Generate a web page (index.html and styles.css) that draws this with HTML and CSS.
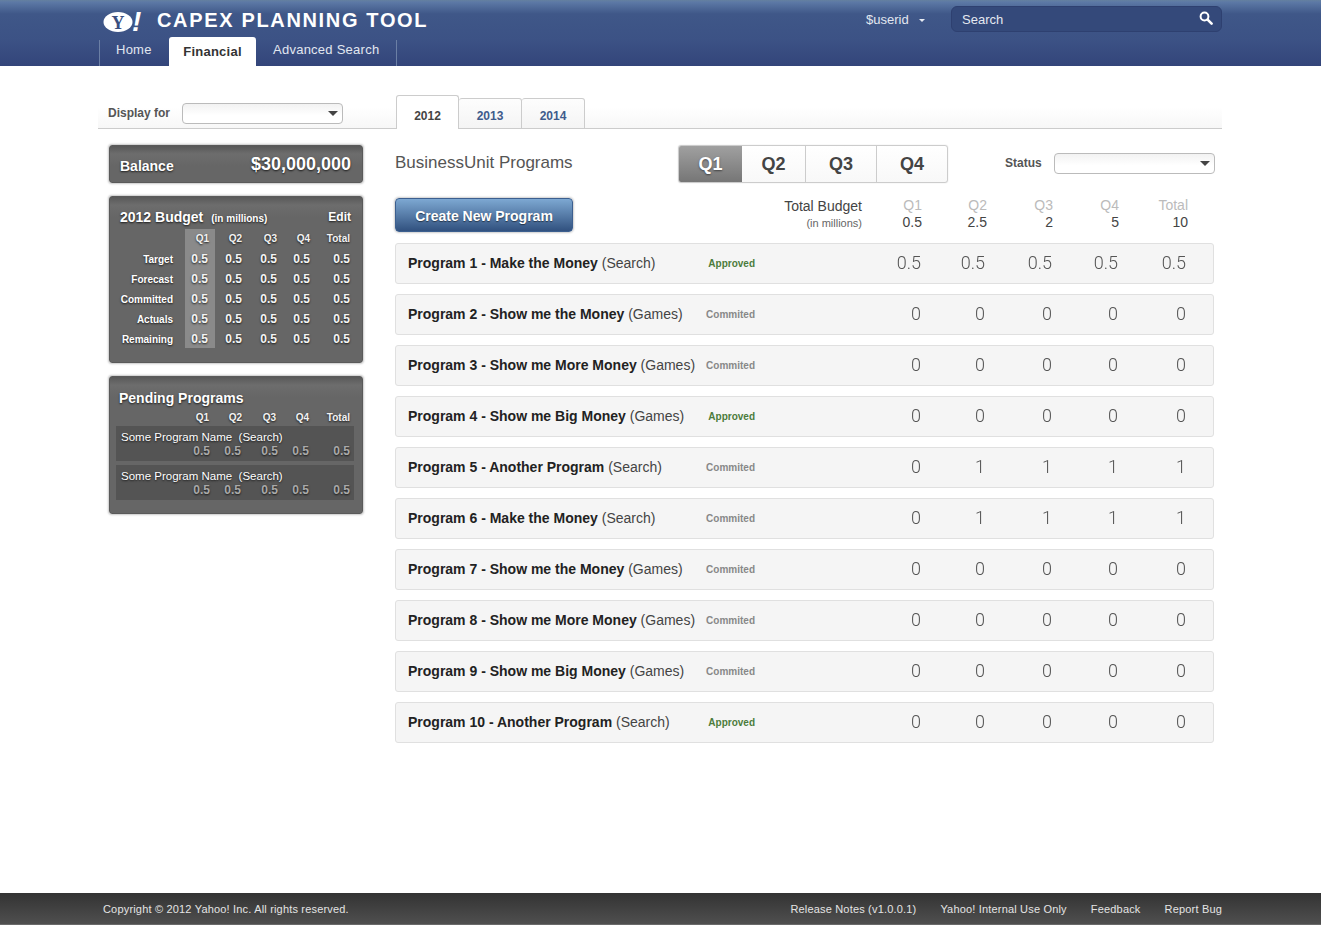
FILE: index.html
```html
<!DOCTYPE html>
<html lang="en">
<head>
<meta charset="utf-8">
<title>CAPEX Planning Tool</title>
<link rel="stylesheet" href="styles.css">
</head>
<body>
<header class="header">
  <div class="wrap">
    <div class="brand-row">
      <svg class="logo" width="44" height="36" viewBox="0 0 44 36" aria-label="Yahoo!">
        <ellipse cx="17" cy="20" rx="14.5" ry="10" fill="#fff"/>
        <text x="17" y="26.5" text-anchor="middle" class="logo-y">Y</text>
        <text x="31" y="29" class="logo-bang">!</text>
      </svg>
      <div class="app-title">CAPEX PLANNING TOOL</div>
      <div class="user">$userid<span class="caret caret-light"></span></div>
      <div class="search">
        <span>Search</span>
        <svg width="14" height="14" viewBox="0 0 14 14"><circle cx="5.5" cy="5.5" r="3.9" fill="none" stroke="#fff" stroke-width="2"/><line x1="8.6" y1="8.6" x2="12.6" y2="12.6" stroke="#fff" stroke-width="2.6" stroke-linecap="round"/></svg>
      </div>
    </div>
    <nav class="nav">
      <a class="nav-item">Home</a>
      <a class="nav-item active">Financial</a>
      <a class="nav-item">Advanced Search</a>
    </nav>
  </div>
</header>

<div class="wrap">
  <div class="toolbar">
    <label class="display-label">Display for</label>
    <div class="select select-display"><span class="caret"></span></div>
    <div class="years">
      <a class="year active">2012</a>
      <a class="year">2013</a>
      <a class="year">2014</a>
    </div>
  </div>

  <div class="content">
    <aside class="sidebar">
      <section class="panel balance">
        <span class="balance-label">Balance</span>
        <span class="balance-value">$30,000,000</span>
      </section>

      <section class="panel budget">
        <div class="budget-title">
          <span><b>2012 Budget</b><small>(in millions)</small></span>
          <a class="edit">Edit</a>
        </div>
        <div class="budget-grid">
          <div></div><div class="th hl">Q1</div><div class="th">Q2</div><div class="th">Q3</div><div class="th">Q4</div><div class="th">Total</div>
          <div class="lbl">Target</div><div class="val hl">0.5</div><div class="val">0.5</div><div class="val">0.5</div><div class="val">0.5</div><div class="val">0.5</div>
          <div class="lbl">Forecast</div><div class="val hl">0.5</div><div class="val">0.5</div><div class="val">0.5</div><div class="val">0.5</div><div class="val">0.5</div>
          <div class="lbl">Committed</div><div class="val hl">0.5</div><div class="val">0.5</div><div class="val">0.5</div><div class="val">0.5</div><div class="val">0.5</div>
          <div class="lbl">Actuals</div><div class="val hl">0.5</div><div class="val">0.5</div><div class="val">0.5</div><div class="val">0.5</div><div class="val">0.5</div>
          <div class="lbl">Remaining</div><div class="val hl">0.5</div><div class="val">0.5</div><div class="val">0.5</div><div class="val">0.5</div><div class="val">0.5</div>
        </div>
      </section>

      <section class="panel pending">
        <h3 class="pending-title">Pending Programs</h3>
        <div class="pending-cols pending-head"><div>Q1</div><div>Q2</div><div>Q3</div><div>Q4</div><div>Total</div></div>
        <div class="pending-row">
          <div class="pending-name">Some Program Name&nbsp; (Search)</div>
          <div class="pending-cols pending-vals"><div>0.5</div><div>0.5</div><div>0.5</div><div>0.5</div><div>0.5</div></div>
        </div>
        <div class="pending-row">
          <div class="pending-name">Some Program Name&nbsp; (Search)</div>
          <div class="pending-cols pending-vals"><div>0.5</div><div>0.5</div><div>0.5</div><div>0.5</div><div>0.5</div></div>
        </div>
      </section>
    </aside>

    <main class="main">
      <div class="main-head">
        <h2 class="main-title">BusinessUnit Programs</h2>
        <div class="quarters">
          <a class="quarter active">Q1</a>
          <a class="quarter">Q2</a>
          <a class="quarter q3">Q3</a>
          <a class="quarter q4">Q4</a>
        </div>
        <label class="status-label">Status</label>
        <div class="select select-status"><span class="caret"></span></div>
      </div>

      <div class="totals">
        <a class="create">Create New Program</a>
        <div class="total-label">Total Budget<small>(in millions)</small></div>
        <div class="total-col"><span>Q1</span>0.5</div>
        <div class="total-col"><span>Q2</span>2.5</div>
        <div class="total-col"><span>Q3</span>2</div>
        <div class="total-col"><span>Q4</span>5</div>
        <div class="total-col"><span>Total</span>10</div>
      </div>

      <div class="programs">
        <div class="program"><div class="name"><b>Program 1 - Make the Money</b> (Search)</div><div class="status approved">Approved</div><div class="num">0.5</div><div class="num">0.5</div><div class="num">0.5</div><div class="num">0.5</div><div class="num">0.5</div></div>
        <div class="program"><div class="name"><b>Program 2 - Show me the Money</b> (Games)</div><div class="status">Commited</div><div class="num">0</div><div class="num">0</div><div class="num">0</div><div class="num">0</div><div class="num">0</div></div>
        <div class="program"><div class="name"><b>Program 3 - Show me More Money</b> (Games)</div><div class="status">Commited</div><div class="num">0</div><div class="num">0</div><div class="num">0</div><div class="num">0</div><div class="num">0</div></div>
        <div class="program"><div class="name"><b>Program 4 - Show me Big Money</b> (Games)</div><div class="status approved">Approved</div><div class="num">0</div><div class="num">0</div><div class="num">0</div><div class="num">0</div><div class="num">0</div></div>
        <div class="program"><div class="name"><b>Program 5 - Another Program</b> (Search)</div><div class="status">Commited</div><div class="num">0</div><div class="num">1</div><div class="num">1</div><div class="num">1</div><div class="num">1</div></div>
        <div class="program"><div class="name"><b>Program 6 - Make the Money</b> (Search)</div><div class="status">Commited</div><div class="num">0</div><div class="num">1</div><div class="num">1</div><div class="num">1</div><div class="num">1</div></div>
        <div class="program"><div class="name"><b>Program 7 - Show me the Money</b> (Games)</div><div class="status">Commited</div><div class="num">0</div><div class="num">0</div><div class="num">0</div><div class="num">0</div><div class="num">0</div></div>
        <div class="program"><div class="name"><b>Program 8 - Show me More Money</b> (Games)</div><div class="status">Commited</div><div class="num">0</div><div class="num">0</div><div class="num">0</div><div class="num">0</div><div class="num">0</div></div>
        <div class="program"><div class="name"><b>Program 9 - Show me Big Money</b> (Games)</div><div class="status">Commited</div><div class="num">0</div><div class="num">0</div><div class="num">0</div><div class="num">0</div><div class="num">0</div></div>
        <div class="program"><div class="name"><b>Program 10 - Another Program</b> (Search)</div><div class="status approved">Approved</div><div class="num">0</div><div class="num">0</div><div class="num">0</div><div class="num">0</div><div class="num">0</div></div>
      </div>
    </main>
  </div>
</div>

<footer class="footer">
  <div class="wrap footer-inner">
    <span class="copyright">Copyright © 2012 Yahoo! Inc. All rights reserved.</span>
    <span class="footer-links">
      <a>Release Notes (v1.0.0.1)</a>
      <a>Yahoo! Internal Use Only</a>
      <a>Feedback</a>
      <a>Report Bug</a>
    </span>
  </div>
</footer>
</body>
</html>
```

FILE: styles.css
```css
* { box-sizing: border-box; }
html, body { height: 100%; }
body {
  margin: 0;
  min-height: 927px;
  display: flex;
  flex-direction: column;
  overflow: hidden;
  background: #fff;
  font-family: "Liberation Sans", Arial, sans-serif;
  color: #333;
}
.wrap { width: 1124px; margin-left: 98px; }

/* Header */
.header {
  height: 66px;
  background: linear-gradient(#64809f 0, #5d79a6 2px, #3f5788 14px, #3c5285 40px, #33457a 66px);
}
.brand-row { height: 37px; display: flex; align-items: flex-start; }
.logo { margin: 2px 0 0 3px; flex: none; overflow: visible; }
.logo-y { font: bold 18px "Liberation Serif", serif; fill: #3a4f80; }
.logo-bang { font: italic bold 28px "Liberation Sans", sans-serif; fill: #fff; }
.app-title {
  margin: 8px 0 0 12px;
  font-size: 20px;
  line-height: 24px;
  font-weight: 700;
  letter-spacing: 1.66px;
  color: #fff;
  white-space: nowrap;
}
.user {
  margin: 12px 0 0 auto;
  width: 85px;
  font-size: 13px;
  line-height: 15px;
  color: #e2e7f0;
  white-space: nowrap;
}
.caret {
  display: inline-block;
  width: 0;
  height: 0;
  border-left: 5px solid transparent;
  border-right: 5px solid transparent;
  border-top: 5px solid #444;
}
.caret-light {
  margin-left: 10px;
  vertical-align: 2px;
  border-left-width: 3px;
  border-right-width: 3px;
  border-top: 3px solid #e8ecf3;
}
.search {
  margin-top: 6px;
  width: 271px;
  height: 26px;
  padding: 0 8px 0 10px;
  display: flex;
  align-items: center;
  justify-content: space-between;
  background: #34497a;
  border: 1px solid #2e4070;
  border-radius: 6px;
  font-size: 13px;
  color: #e4e8f0;
}
.search svg { margin-bottom: 3px; }
.nav { height: 29px; display: flex; align-items: flex-end; font-size: 13px; letter-spacing: .25px; }
.nav-item {
  height: 26px;
  color: #e2e7f0;
  line-height: 20px;
  padding: 0 17px;
  border-left: 1px solid #6b7fa5;
  margin-left: 1px;
}
.nav-item:first-child { width: 70px; padding-left: 16px; }
.nav-item.active {
  height: 29px;
  width: 87px;
  margin-left: 0;
  padding: 0;
  text-align: center;
  border: 0;
  background: #fff;
  color: #333;
  font-weight: 700;
  line-height: 29px;
  border-radius: 3px 3px 0 0;
}
.nav-item:last-child { border-left: 0; border-right: 1px solid #6b7fa5; margin-left: 0; }

/* Toolbar */
.toolbar {
  margin-top: 29px;
  height: 34px;
  display: flex;
  align-items: flex-end;
  border-bottom: 1px solid #ccc;
  background: linear-gradient(#fff 12px, #f7f7f7);
}
.display-label {
  margin: 0 12px 7px 10px;
  width: 62px;
  font-size: 12px;
  line-height: 16px;
  font-weight: 700;
  color: #555;
  white-space: nowrap;
}
.select {
  height: 21px;
  display: flex;
  align-items: center;
  justify-content: flex-end;
  padding-right: 4px;
  background: linear-gradient(#f2f2f2, #fff 60%);
  border: 1px solid #bbb;
  border-radius: 4px;
}
.select-display { width: 161px; margin-bottom: 4px; }
.select-status { width: 161px; margin-bottom: 1px; }
.years { margin-left: 53px; display: flex; align-items: flex-end; margin-bottom: -1px; }
.year {
  width: 63px;
  height: 31px;
  padding-top: 9px;
  text-align: center;
  font-size: 12px;
  line-height: 16px;
  font-weight: 700;
  color: #3f5b8c;
  background: linear-gradient(#fdfdfd, #f4f4f4);
  border: 1px solid #ccc;
  border-width: 1px 1px 1px 0;
  border-radius: 3px 3px 0 0;
}
.year.active {
  height: 34px;
  padding-top: 12px;
  color: #444;
  background: #fff;
  border-width: 1px 1px 0 1px;
}

/* Layout */
.content { display: flex; align-items: flex-start; }
.sidebar {
  margin: 16px 0 0 11px;
  width: 254px;
  display: flex;
  flex-direction: column;
  gap: 13px;
}
.panel {
  background: linear-gradient(#585858 0, #6d6d6d 8px, #666 20px, #666 100%);
  border-radius: 3px;
  border: 1px solid #5a5a5a;
  box-shadow: 0 0 2px 1px rgba(0,0,0,.22);
  color: #fff;
  text-shadow: 0 1px 2px rgba(0,0,0,.75);
}
.balance {
  height: 38px;
  display: flex;
  align-items: center;
  justify-content: space-between;
  padding: 0 11px 0 10px;
}
.balance-label { font-size: 14px; font-weight: 700; padding-top: 3px; }
.balance-value { font-size: 18px; font-weight: 700; padding-top: 1px; }
.budget { height: 167px; padding: 0 13px 0 10px; }
.budget-title {
  height: 32px;
  display: flex;
  align-items: flex-end;
  justify-content: space-between;
  padding-bottom: 2px;
  line-height: 16px;
}
.budget-title b { font-size: 14px; }
.budget-title small { font-size: 10px; font-weight: 700; margin-left: 8px; }
.edit { font-size: 12px; font-weight: 700; margin: 0 -2px 2px 0; }
.budget-grid {
  display: grid;
  grid-template-columns: 65px 30px 27px 35px 33px 40px;
  grid-template-rows: 19px repeat(5, 20px);
}
.th { font-size: 10px; font-weight: 700; text-align: right; line-height: 19px; color: #f2f2f2; }
.val { font-size: 12px; font-weight: 700; text-align: right; line-height: 23px; color: #f4f4f4; }
.lbl { font-size: 10px; font-weight: 700; text-align: right; line-height: 24px; padding-right: 12px; white-space: nowrap; }
.hl { background: #8a8a8a; padding-right: 7px; }
.th.hl { padding-right: 6px; }
.pending { height: 138px; padding: 0 8px 0 6px; }
.pending-title {
  margin: 0;
  padding: 13px 0 0 3px;
  font-size: 14px;
  line-height: 17px;
  font-weight: 700;
}
.pending-cols {
  display: grid;
  grid-template-columns: 94px 31px 37px 31px 41px;
  text-align: right;
  font-size: 12px;
  font-weight: 700;
}
.pending-head {
  grid-template-columns: 93px 33px 34px 33px 41px;
  font-size: 10px;
  line-height: 15px;
  padding-top: 3px;
  margin-bottom: 1px;
  color: #f2f2f2;
}
.pending-row { height: 35px; margin-bottom: 4px; background: #545454; }
.pending-name {
  padding: 4px 0 0 5px;
  font-size: 11.5px;
  line-height: 14px;
  white-space: nowrap;
}
.pending-vals { line-height: 14px; color: #a9a9a9; }

/* Main */
.main { margin-left: 32px; width: 820px; }
.main-head { display: flex; align-items: center; padding-top: 16px; height: 54px; }
.main-title {
  margin: 0;
  width: 283px;
  font-size: 17px;
  font-weight: 400;
  color: #555;
  white-space: nowrap;
  padding-bottom: 3px;
}
.quarters {
  width: 270px;
  height: 38px;
  display: flex;
  background: linear-gradient(#fff, #f8f8f8);
  border: 1px solid #ccc;
  border-radius: 3px;
  box-shadow: 0 0 1px rgba(0,0,0,.25);
}
.quarter {
  width: 64px;
  text-align: center;
  font-size: 18px;
  font-weight: 700;
  line-height: 36px;
  color: #444;
  border-right: 1px solid #ccc;
}
.q3 { width: 71px; }
.q4 { flex: 1; border-right: 0; }
.quarter.active {
  width: 63px;
  color: #fff;
  border-right: 0;
  border-radius: 2px 0 0 2px;
  background: linear-gradient(#a0a0a0, #767676);
  text-shadow: 0 1px 2px rgba(0,0,0,.5);
}
.status-label {
  margin-left: 57px;
  width: 49px;
  font-size: 12px;
  font-weight: 700;
  color: #555;
  padding-bottom: 2px;
}
.totals {
  margin-top: 15px;
  height: 34px;
  display: grid;
  grid-template-columns: 178px 289px 60px 65px 66px 66px 69px;
  width: 793px;
}
.create {
  height: 34px;
  text-align: center;
  font-size: 14px;
  font-weight: 700;
  line-height: 34px;
  color: #fff;
  text-shadow: 0 1px 1px rgba(0,0,0,.5);
  background: linear-gradient(#7da8d2, #31517f);
  border: 1px solid #3c5f8f;
  border-radius: 4px;
  box-shadow: 0 0 2px 1px rgba(0,0,0,.2);
}
.total-label {
  text-align: right;
  font-size: 14px;
  line-height: 17px;
  color: #444;
}
.total-label small { display: block; font-size: 11px; line-height: 16px; color: #666; }
.total-col { text-align: right; font-size: 14px; line-height: 17px; color: #444; margin-top: -1px; }
.total-col span { display: block; color: #bbb; }
.programs { margin-top: 11px; display: flex; flex-direction: column; gap: 10px; width: 819px; }
.program {
  height: 41px;
  display: grid;
  grid-template-columns: 292px 55px 166px 64px 67px 66px 68px;
  align-items: center;
  padding-left: 12px;
  background: #f5f5f5;
  border: 1px solid #e0e0e0;
  border-radius: 3px;
}
.name { font-size: 14px; color: #444; white-space: nowrap; padding-bottom: 1px; }
.name b { color: #222; }
.status { font-size: 10px; font-weight: 700; color: #888; text-align: right; padding-bottom: 1px; }
.status.approved { color: #4c7c3c; }
.num { font-family: Roboto, "Liberation Sans", sans-serif; font-weight: 300; font-size: 18px; color: #555; text-align: right; padding-bottom: 2px; will-change: transform; }

/* Footer */
.footer {
  margin-top: auto;
  margin-bottom: 2px;
  height: 32px;
  background: linear-gradient(#333, #4f4f4f);
  border-bottom: 1px solid #6a6a6a;
  color: #e4e4e4;
  font-size: 11px;
  letter-spacing: .18px;
}
.footer-inner {
  display: flex;
  justify-content: space-between;
  padding-left: 5px;
  line-height: 32px;
}
.footer-links { display: flex; gap: 24px; }
```
